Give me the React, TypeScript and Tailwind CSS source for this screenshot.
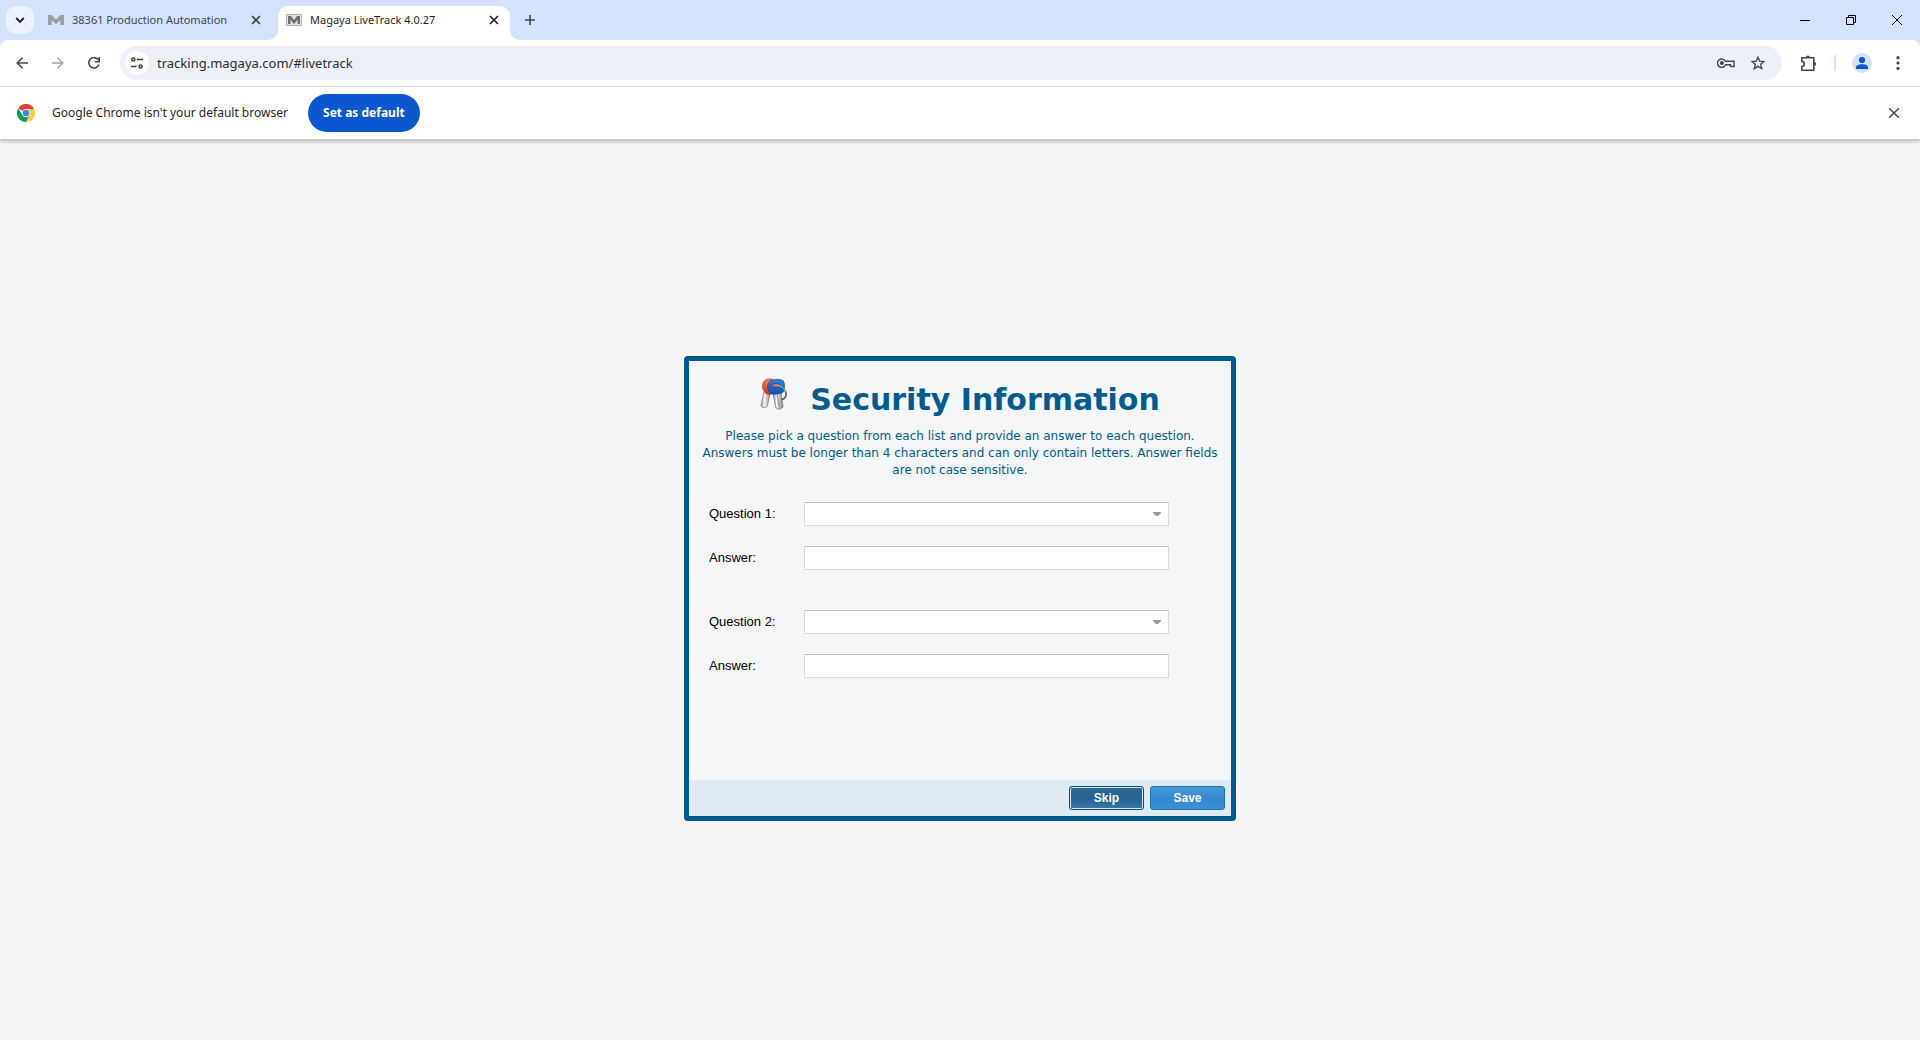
import React from "react";

const ui = "font-['Noto_Sans','Open_Sans',sans-serif]";

function MagayaMark({ boxed = false }: { boxed?: boolean }) {
  return (
    <svg width="16" height="16" viewBox="0 0 16 16" aria-hidden="true" className="shrink-0">
      {boxed && <rect x="0.5" y="2.5" width="15" height="11" fill="#e4e4e6" stroke="#b4b4b7" />}
      {boxed ? (
        <path d="M2 12V4h3l3 4 3-4h3v8h-2.500V7.500L8.700 11.500H7.300L4.500 7.500V12z" fill="#6f6f73" />
      ) : (
        <path d="M0 13V3h3.500L8 7.500 12.500 3H16v10h-3.800V8L9 11.500H7L3.800 8V13z" fill="#9aa0a6" />
      )}
    </svg>
  );
}

function Cross({ size = 10, width = 1.6, color = "#3c4043" }: { size?: number; width?: number; color?: string }) {
  return (
    <svg width={size} height={size} viewBox="0 0 10 10" aria-hidden="true">
      <path d="M1 1l8 8M9 1l-8 8" stroke={color} strokeWidth={width} fill="none" />
    </svg>
  );
}

function TabStrip() {
  return (
    <div className="flex h-10 items-center bg-[#d3e3fd] pl-1.5">
      <button aria-label="Search tabs" className="flex size-7 items-center justify-center rounded-[10px] bg-[#ecf2fe]">
        <svg width="10" height="10" viewBox="0 0 10 10" aria-hidden="true">
          <path d="M1.200 3L5 6.800 8.800 3" stroke="#1f1f1f" strokeWidth="1.900" fill="none" />
        </svg>
      </button>
      <div className="ml-3.5 flex w-[230px] items-center gap-2">
        <MagayaMark />
        <span className="flex-1 text-[11px] whitespace-nowrap text-[#3f4550]">38361 Production Automation</span>
        <button aria-label="Close 38361 Production Automation" className="mr-[17px]">
          <Cross />
        </button>
      </div>
      <div className="relative flex h-[34px] w-[232px] items-center gap-2 self-end rounded-t-[10px] bg-white pr-[11px] pb-1.5 pl-2">
        <svg className="absolute bottom-0 -left-2.5" width="10" height="10" aria-hidden="true">
          <path d="M10 0v10H0A10 10 0 0 0 10 0" fill="#fff" />
        </svg>
        <svg className="absolute -right-2.5 bottom-0" width="10" height="10" aria-hidden="true">
          <path d="M0 0v10h10A10 10 0 0 1 0 0" fill="#fff" />
        </svg>
        <MagayaMark boxed />
        <span className="flex-1 text-[11px] whitespace-nowrap text-[#1f1f1f]">Magaya LiveTrack 4.0.27</span>
        <button aria-label="Close Magaya LiveTrack">
          <Cross color="#1f1f1f" />
        </button>
      </div>
      <button aria-label="New tab" className="ml-[15px]">
        <svg width="10" height="10" viewBox="0 0 10 10" aria-hidden="true">
          <path d="M5 0v10M0 5h10" stroke="#474747" strokeWidth="1.600" />
        </svg>
      </button>
      <div className="ml-auto flex">
        <button aria-label="Minimize" className="flex h-10 w-[46px] items-center justify-center">
          <svg width="10" height="10" shapeRendering="crispEdges" aria-hidden="true">
            <path d="M0 5.500h10" stroke="#000" />
          </svg>
        </button>
        <button aria-label="Restore" className="flex h-10 w-[46px] items-center justify-center">
          <svg width="10" height="10" aria-hidden="true">
            <path d="M.5 2.500h7v7h-7zM2.500 2.500v-2h7v7h-2" stroke="#000" fill="none" />
          </svg>
        </button>
        <button aria-label="Close window" className="flex h-10 w-[46px] items-center justify-center">
          <svg width="10" height="10" aria-hidden="true">
            <path d="M0 0l10 10M10 0L0 10" stroke="#000" />
          </svg>
        </button>
      </div>
    </div>
  );
}

function Toolbar() {
  return (
    <div className="bg-[#d3e3fd]">
      <div className="flex h-[47px] items-center rounded-t-[8px] border-b border-[#dcdfe1] bg-white pr-3.5 pl-4">
        <button aria-label="Back">
          <svg width="12" height="12" viewBox="0 0 12 12" aria-hidden="true">
            <path d="M12 6H1.200M6.500.7L1.200 6l5.300 5.300" stroke="#474747" strokeWidth="1.500" fill="none" />
          </svg>
        </button>
        <button aria-label="Forward" className="ml-6">
          <svg width="12" height="12" viewBox="0 0 12 12" aria-hidden="true">
            <path d="M0 6h10.800M5.500.7L10.800 6l-5.300 5.300" stroke="#a3a3a3" strokeWidth="1.500" fill="none" />
          </svg>
        </button>
        <button aria-label="Reload" className="ml-6">
          <svg width="12" height="12" viewBox="0 0 12 12" aria-hidden="true">
            <path d="M10.900 7.400A5.200 5.200 0 1 1 10.500 3.200" stroke="#474747" strokeWidth="1.600" fill="none" />
            <path d="M11.200 0v4.700H6.700" stroke="#474747" strokeWidth="1.600" fill="none" />
          </svg>
        </button>
        <div className="ml-5 flex h-[34px] flex-1 items-center rounded-full bg-[#ecf0f9] pr-[17px] pl-[5px]">
          <button aria-label="View site information" className="flex size-6 items-center justify-center rounded-full bg-white">
            <svg width="12" height="12" viewBox="0 0 12 12" fill="none" stroke="#3c4043" strokeWidth="1.600" aria-hidden="true">
              <circle cx="2.300" cy="2.500" r="1.500" />
              <path d="M5.800 2.500H12M0 9.500h5.500" />
              <circle cx="9.600" cy="9.500" r="1.500" />
            </svg>
          </button>
          <input
            aria-label="Address"
            defaultValue="tracking.magaya.com/#livetrack"
            className="ml-2 h-5 flex-1 bg-transparent text-[13px] text-[#2b2d31] outline-none"
          />
          <button aria-label="Passwords">
            <svg width="18" height="10" viewBox="0 0 18 10" fill="none" stroke="#474747" strokeWidth="1.400" aria-hidden="true">
              <path d="M8.400 3.300h8.700v5.200h-3.600V6.700H8.600A4.200 4.200 0 1 1 8.400 3.300z" />
              <circle cx="4.900" cy="5" r="1.300" fill="#474747" />
            </svg>
          </button>
          <button aria-label="Bookmark this tab" className="ml-4">
            <svg width="14" height="14" viewBox="0 0 14 14" fill="none" stroke="#474747" strokeWidth="1.400" aria-hidden="true">
              <path d="M7 1.200l1.700 3.900 4.200.4-3.200 2.800 1 4.200L7 10.300l-3.700 2.200 1-4.200-3.200-2.800 4.200-.4z" />
            </svg>
          </button>
        </div>
        <button aria-label="Extensions" className="ml-[18px]">
          <svg width="17" height="17" viewBox="0 0 17 17" aria-hidden="true">
            <path
              d="M1.800 2.800h12v12.400h-12v-3.700a2.500 2.500 0 0 0 0-5z"
              fill="none"
              stroke="#474747"
              strokeWidth="1.600"
              strokeLinejoin="round"
            />
            <path d="M6 2.500a1.900 1.900 0 0 1 3.800 0zM14.200 7a1.900 1.900 0 0 1 0 4z" fill="#474747" />
          </svg>
        </button>
        <div className="ml-[17px] h-4 w-0.5 bg-[#d3e3fd]" />
        <button aria-label="Profile" className="ml-4">
          <svg width="20" height="20" viewBox="0 0 20 20" aria-hidden="true">
            <circle cx="10" cy="10" r="10" fill="#d3e3fd" />
            <circle cx="10" cy="7" r="3.100" fill="#0b57d0" />
            <path d="M4 16v-1.500c0-2 3-3.200 6-3.200s6 1.200 6 3.200V16z" fill="#0b57d0" />
          </svg>
        </button>
        <button aria-label="Menu" className="ml-[18px] flex w-4 justify-center">
          <svg width="4" height="14" viewBox="0 0 4 14" fill="#474747" aria-hidden="true">
            <circle cx="2" cy="1.700" r="1.600" />
            <circle cx="2" cy="7" r="1.600" />
            <circle cx="2" cy="12.300" r="1.600" />
          </svg>
        </button>
      </div>
    </div>
  );
}

function ChromeLogo() {
  return (
    <svg width="18" height="18" viewBox="0 0 48 48" aria-hidden="true">
      <path d="M24 24L3.200 12A24 24 0 0 1 44.800 12z" fill="#db4437" />
      <path d="M24 24L44.800 12A24 24 0 0 1 24 48z" fill="#ffcd40" />
      <path d="M24 13h20.800L33.500 29.500z" fill="#ffcd40" />
      <path d="M14.500 29.500L3.200 12A24 24 0 0 0 24 48l9.500-18.500z" fill="#0f9d58" />
      <circle cx="24" cy="24" r="11" fill="#fff" />
      <circle cx="24" cy="24" r="8.800" fill="#4285f4" />
    </svg>
  );
}

function InfoBar() {
  return (
    <div className="relative flex h-[53px] items-center border-b border-[#c3c6c6] bg-white pr-5 pl-[17px] shadow-[0_2px_3px_rgba(0,0,0,0.2)]">
      <ChromeLogo />
      <span className="ml-[17px] text-xs text-[#1f1f1f]">Google Chrome isn't your default browser</span>
      <button className="ml-5 h-[38px] w-28 rounded-full bg-[#0b57d0] text-xs font-bold text-white">Set as default</button>
      <button aria-label="Close" className="ml-auto">
        <Cross size={12} width={1.2} color="#474747" />
      </button>
    </div>
  );
}

function Keys() {
  return (
    <svg width="28" height="32" viewBox="0 0 28 32" aria-hidden="true" className="shrink-0">
      <defs>
        <linearGradient id="blade" x1="0" x2="1">
          <stop offset="0" stopColor="#8d8d8d" />
          <stop offset="0.350" stopColor="#f4f4f4" />
          <stop offset="1" stopColor="#8a8a8a" />
        </linearGradient>
        <linearGradient id="red" x1="0" y1="0" x2="0" y2="1">
          <stop offset="0" stopColor="#ff7a55" />
          <stop offset="1" stopColor="#d63212" />
        </linearGradient>
        <linearGradient id="blue" x1="0" y1="0" x2="0" y2="1">
          <stop offset="0" stopColor="#2a86ee" />
          <stop offset="1" stopColor="#0450b8" />
        </linearGradient>
      </defs>
      <path d="M4 14h6.500L7.300 28c-1 2.500-6 2-6.300-.6z" fill="url(#blade)" stroke="#777" strokeWidth=".7" />
      <path d="M13 15h8l2 14-2.700 2c-2 .4-4.300-.2-4.600-2z" fill="url(#blade)" stroke="#666" strokeWidth=".7" />
      <path d="M17 17l2.500 12" stroke="#777" strokeWidth=".8" />
      <path d="M6 1.500C9 .5 13 .5 14 3l-2 13c-3 1-6 .3-7.500-2C1.500 10 2 4 6 1.500z" fill="url(#red)" stroke="#c33316" strokeWidth=".7" />
      <path d="M11 2.500c4-1.500 9-1.500 12 0 2 3 2 7 .2 11.500-3 2.300-9 2.700-12.500 1.500C6.500 12 6.500 6 11 2.500z" fill="url(#blue)" stroke="#05469d" strokeWidth=".7" />
      <ellipse cx="16" cy="7.500" rx="4.200" ry="2.200" fill="#e0583a" stroke="#083f91" strokeWidth=".6" />
      <path d="M14.500 7.500c5-1 10 2.500 11.500 7 .8 4-1.500 7-4.800 6.800" fill="none" stroke="#5f646a" strokeWidth="1.800" />
      <path d="M14.500 7.300c5-1 9.700 2.300 11.300 6.700" fill="none" stroke="#c9cdd2" strokeWidth=".8" />
    </svg>
  );
}

const field =
  "h-6 w-full rounded-none border border-[#d9d9d9] border-t-[#c0c0c0] bg-white px-1.5 text-[13px] outline-none";

function Question({ n }: { n: number }) {
  return (
    <div className="grid grid-cols-[95px_365px] items-center gap-y-5 text-[13px]">
      <label htmlFor={`question-${n}`}>Question {n}:</label>
      <div className="relative h-6">
        <select id={`question-${n}`} className={`${field} appearance-none`} defaultValue="">
          <option value=""></option>
        </select>
        <svg className="pointer-events-none absolute top-2.5 right-2" width="8" height="4" aria-hidden="true">
          <path d="M0 0h8v1L5 4H3L0 1z" fill="#999" />
        </svg>
      </div>
      <label htmlFor={`answer-${n}`}>Answer:</label>
      <input id={`answer-${n}`} type="text" className={field} />
    </div>
  );
}

function SecurityDialog() {
  return (
    <section
      aria-labelledby="dialog-title"
      className="flex w-[552px] flex-col rounded-[4px] border-[5px] border-[#005c8e] bg-[#f4f6f8] font-['Liberation_Sans',Arial,sans-serif] text-black shadow-[0_0_0_2px_#f9f9f9]"
    >
      <header className="px-2.5 pt-[17px] text-center font-['DejaVu_Sans',Verdana,sans-serif] text-[#005c8e]">
        <div className="flex justify-center gap-[22px]">
          <Keys />
          <h1 id="dialog-title" className="text-[30px] leading-[44px] font-bold whitespace-nowrap">
            Security Information
          </h1>
        </div>
        <p className="mt-1.5 text-xs leading-[17px]">
          Please pick a question from each list and provide an answer to each question. Answers must be longer than 4
          characters and can only contain letters. Answer fields are not case sensitive.
        </p>
      </header>
      <div className="flex flex-col gap-10 px-5 pt-[23px] pb-[102px]">
        <Question n={1} />
        <Question n={2} />
      </div>
      <footer className="flex justify-end gap-1.5 bg-[#e0eaf3] p-1.5">
        <button className="h-6 w-[75px] rounded-[3px] border border-[#0f4c78] bg-linear-to-b from-[#2c6a9b] via-[#256290] to-[#3a77a5] text-xs font-bold text-white shadow-[inset_0_0_0_1px_#d5e6f3]">
          Skip
        </button>
        <button className="h-6 w-[75px] rounded-[3px] border border-[#1971b5] bg-linear-to-b from-[#4b9bdb] via-[#3189d0] to-[#3b90d6] text-xs font-bold text-white">
          Save
        </button>
      </footer>
    </section>
  );
}

export default function App() {
  return (
    <div className={`flex min-h-screen flex-col bg-[#f5f5f5] ${ui}`}>
      <TabStrip />
      <Toolbar />
      <InfoBar />
      <main className="flex flex-1 items-center justify-center pb-1">
        <SecurityDialog />
      </main>
    </div>
  );
}
